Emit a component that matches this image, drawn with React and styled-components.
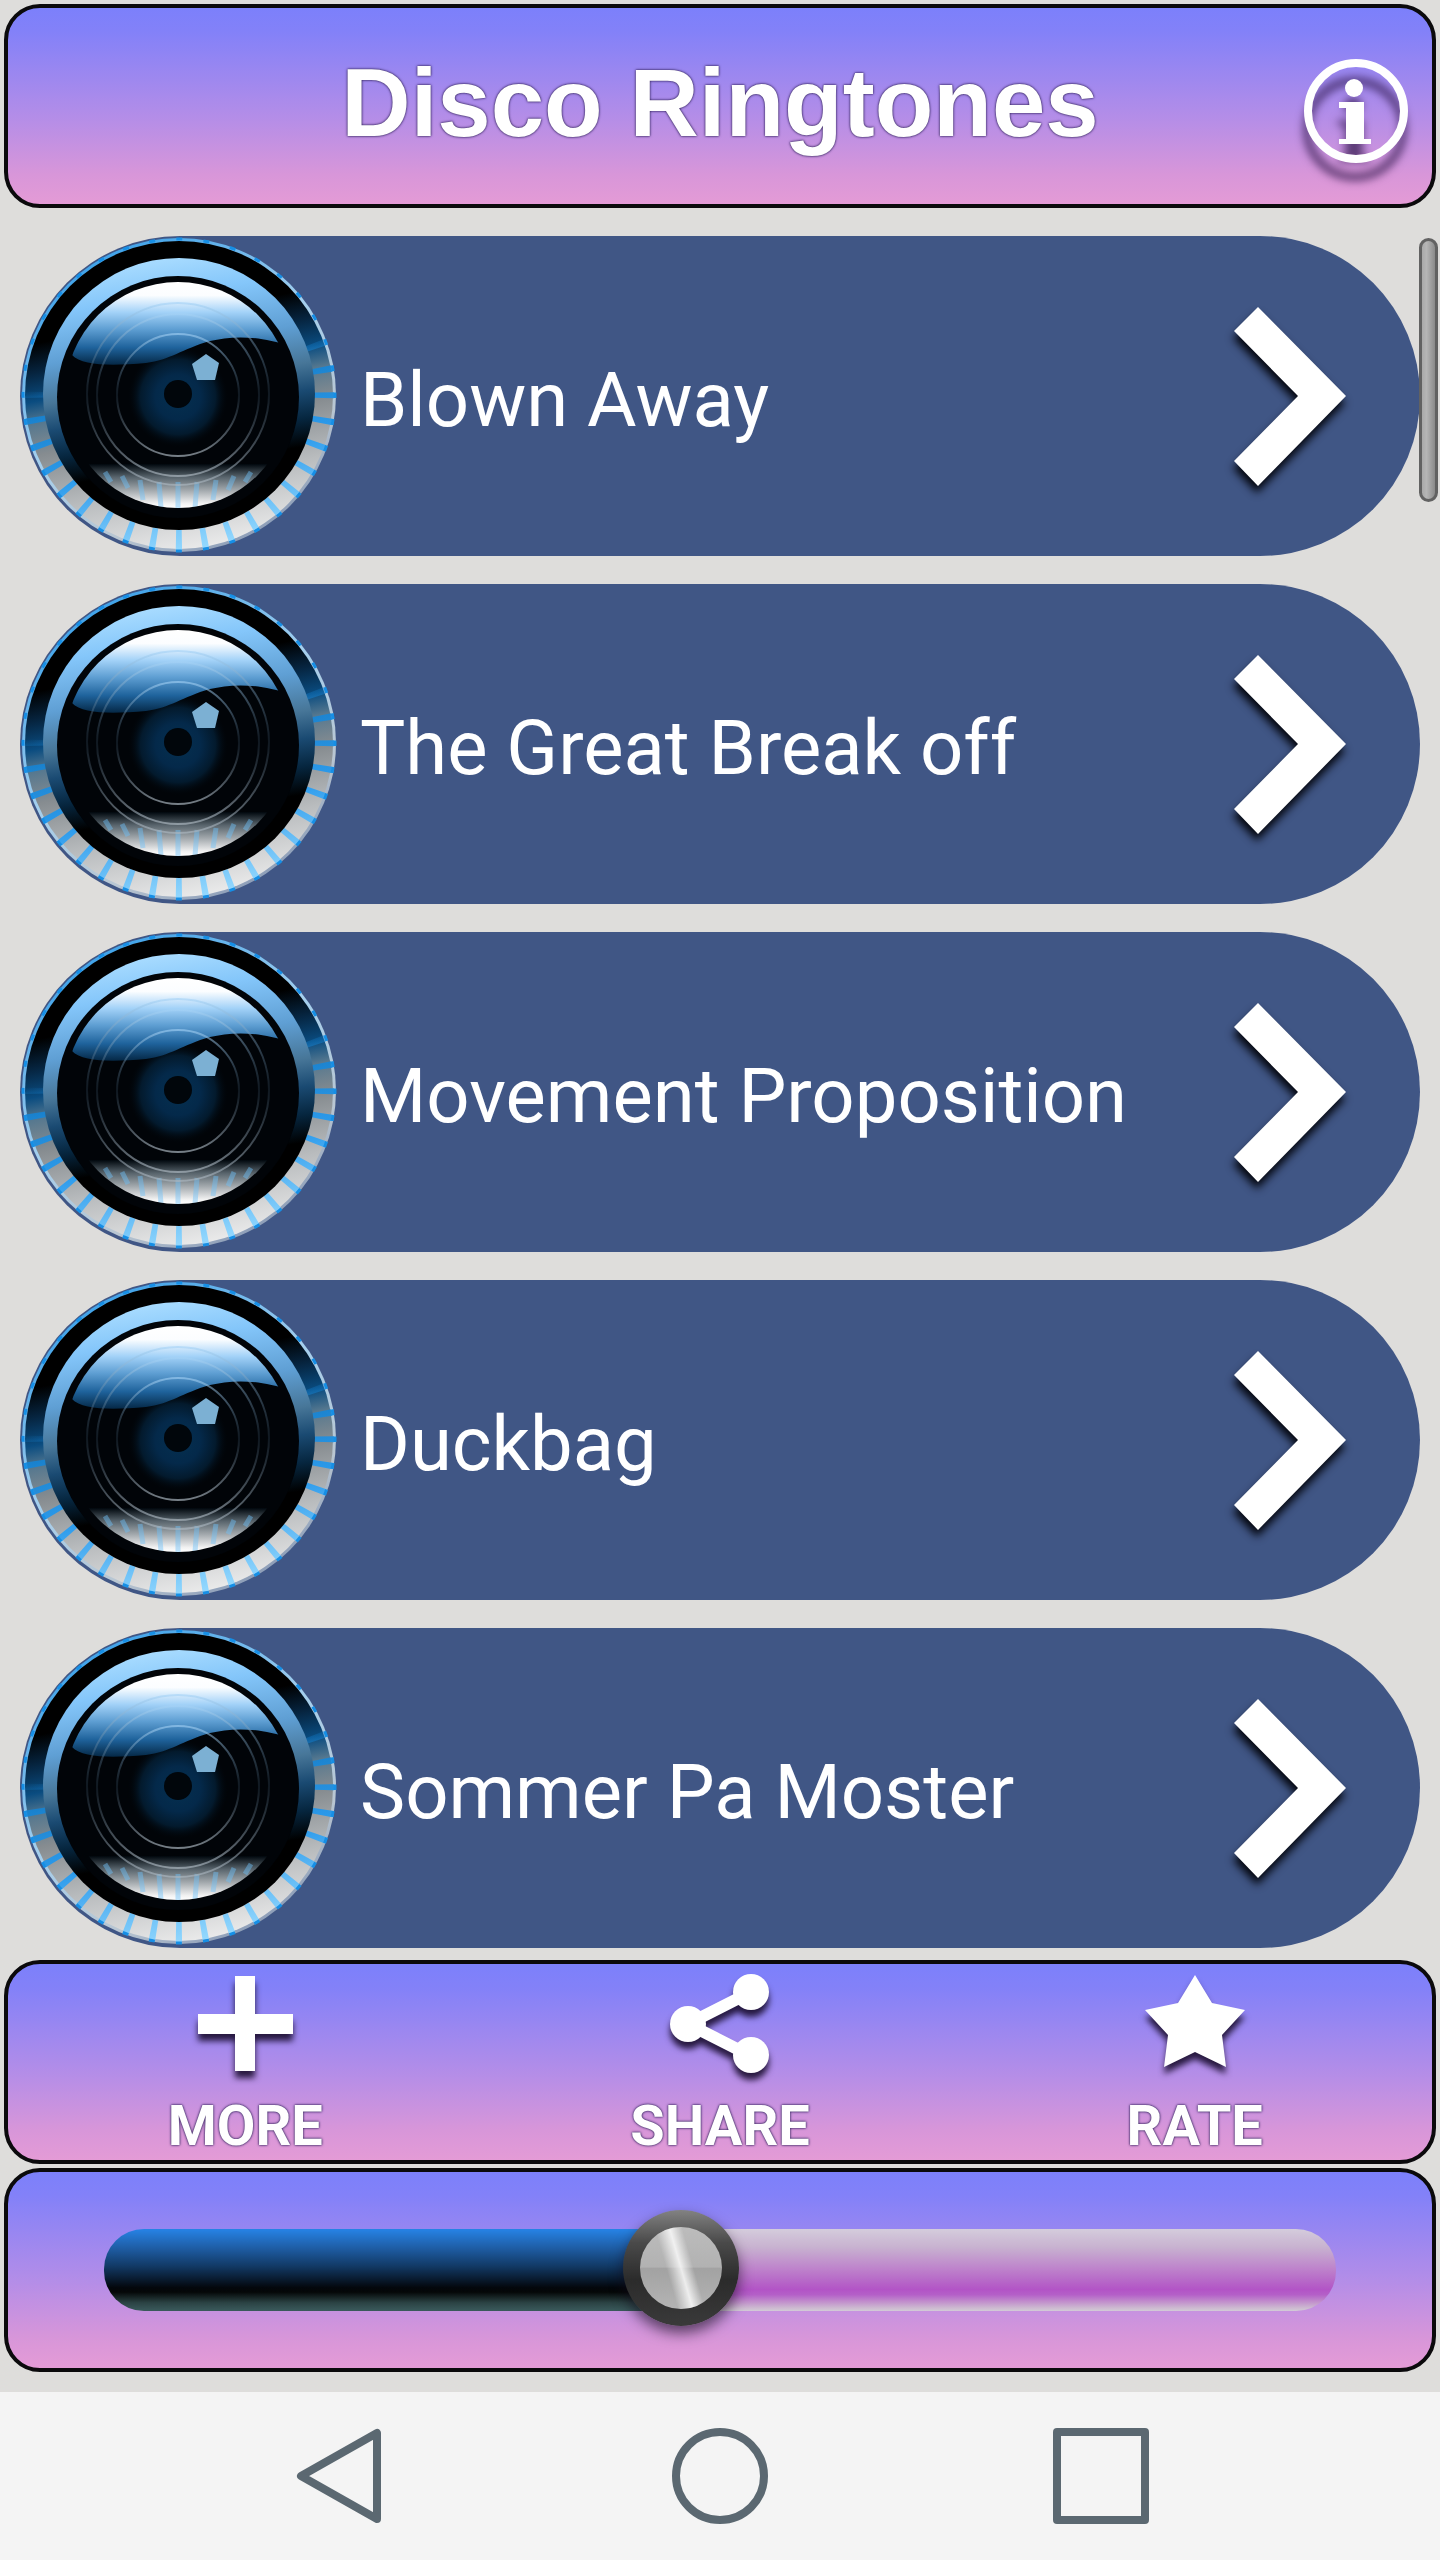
import React, { useState } from "react";
import styled, { createGlobalStyle, css } from "styled-components";

const GlobalStyle = createGlobalStyle`
  *, *::before, *::after { box-sizing: border-box; }
  body {
    margin: 0;
    background: #dedddb;
    font-family: Roboto, "Liberation Sans", sans-serif;
  }
`;

const plainButton = css`
  margin: 0;
  padding: 0;
  border: 0;
  background: none;
  color: inherit;
  font: inherit;
  cursor: pointer;
`;

const outlinedText = css`
  text-shadow: 0 0 2px #2c1c54, 0 0 3px #4a3a78;
`;

const Page = styled.div`
  display: flex;
  flex-direction: column;
  min-height: 100vh;
`;

const Panel = styled.div`
  min-height: 204px;
  margin: 0 4px;
  border: 4px solid #0b0a0c;
  border-radius: 36px;
  background: linear-gradient(#7c80fb 0%, #8381f8 12%, #b38de8 55%, #d896d9 85%, #e49bd6 100%);
  color: #fff;
`;

const Header = styled(Panel)`
  display: grid;
  grid-template-columns: 1fr auto 1fr;
  align-items: center;
  margin-top: 4px;
  padding: 0 24px;
`;

const Title = styled.h1`
  grid-column: 2;
  margin: 0 0 6px;
  font: bold 96px/112px "Liberation Sans", Arial, sans-serif;
  ${outlinedText}
`;

const InfoButton = styled.button`
  ${plainButton}
  justify-self: end;
  display: flex;
`;

const Shadowed = styled.svg`
  display: block;
  overflow: visible;
  filter: drop-shadow(${(p) => p.$shadow});
`;

const HiddenDefs = styled.svg`
  position: absolute;
`;

const ListArea = styled.main`
  position: relative;
  margin: 28px 20px 12px;
`;

const List = styled.ul`
  display: flex;
  flex-direction: column;
  gap: 28px;
  margin: 0;
  padding: 0;
  list-style: none;
`;

const Row = styled.button`
  ${plainButton}
  display: flex;
  align-items: center;
  gap: 20px;
  width: 100%;
  height: 320px;
  padding-right: 74px;
  border-radius: 160px;
  background: #405685;
  color: #fff;
  text-align: left;
`;

const RowLabel = styled.span`
  flex: 1;
  padding-top: 8px;
  font-size: 76px;
  line-height: 92px;
  white-space: nowrap;
`;

const ScrollThumb = styled.div`
  position: absolute;
  top: 2px;
  right: -18px;
  width: 19px;
  height: 264px;
  border: 3px solid #626262;
  border-radius: 10px;
  background: linear-gradient(90deg, #a9a9a9, #b6b6b6 35%, #8a8a8a);
`;

const Actions = styled(Panel)`
  display: flex;
  margin-bottom: 4px;
`;

const Action = styled.button`
  ${plainButton}
  flex: 1;
  display: flex;
  flex-direction: column;
  align-items: center;
  gap: 20px;
  padding-top: 10px;
  font-size: 56px;
  font-weight: 700;
  line-height: 64px;
  ${outlinedText}
`;

const VolumePanel = styled(Panel)`
  display: flex;
  align-items: center;
  margin-bottom: 20px;
  padding: 0 96px;
`;

const Volume = styled.input`
  appearance: none;
  width: 100%;
  height: 116px;
  margin: 0;
  background: none;

  &::-webkit-slider-runnable-track {
    height: 82px;
    border-radius: 40px;
    background:
      linear-gradient(#2683e6 0%, #1f5fa8 22%, #123a66 45%, #03060b 72%, #050808 77%, #2b4344 90%, #3a5a5c 100%)
        0 0 / var(--fill) 100% no-repeat,
      linear-gradient(#d4ccdc 0%, #c8b2d0 22%, #bd80cb 50%, #b254c6 74%, #b45fc8 80%, #ccb8d0 96%, #d2cad6 100%);
  }

  &::-webkit-slider-thumb {
    appearance: none;
    width: 116px;
    height: 116px;
    margin-top: -19px;
    border: 17px solid transparent;
    border-radius: 50%;
    background:
      linear-gradient(74deg, #fff0 36%, #fffa 48%, #fffc 50%, #fffa 52%, #fff0 62%) padding-box,
      linear-gradient(#bcbcbc, #b2b2b2 49%, #a2a2a2 50%, #b4b4b4) padding-box,
      linear-gradient(#828282, #4a4a4a 28%, #2b2b2b 60%, #3a3a3a) border-box;
    box-shadow: 0 7px 14px #1008189a;
  }
`;

const NavBar = styled.nav`
  display: flex;
  justify-content: center;
  align-items: center;
  gap: 285px;
  height: 168px;
  margin-top: auto;
  background: #f4f4f4;
`;

const NavButton = styled.button`
  ${plainButton}
  display: flex;
  color: #5b6871;
`;

function InfoIcon() {
  return (
    <Shadowed $shadow="-1px 18px 4px #2a1245aa" width="104" height="114" viewBox="0 -10 104 114" aria-hidden="true">
      <circle cx="52" cy="52" r="48" fill="none" stroke="#fff" strokeWidth="8" />
      <circle cx="50" cy="29" r="9" fill="#fff" />
      <path d="M35 43h25v37h7v5H35v-5h7V49h-7z" fill="#fff" />
    </Shadowed>
  );
}

function LensDefs() {
  return (
    <HiddenDefs width="0" height="0" aria-hidden="true">
      <defs>
        <linearGradient id="rim" x1=".4" y1="0" x2=".6" y2="1">
          <stop offset="0" stopColor="#000" />
          <stop offset=".25" stopColor="#000" />
          <stop offset=".34" stopColor="#06243f" />
          <stop offset=".43" stopColor="#0a4c80" />
          <stop offset=".5" stopColor="#56788f" />
          <stop offset=".6" stopColor="#868c90" />
          <stop offset=".78" stopColor="#b9bcbe" />
          <stop offset="1" stopColor="#ececec" />
        </linearGradient>
        <linearGradient id="rimEdge" x1=".2" y1="0" x2=".8" y2="1">
          <stop offset="0" stopColor="#2f9be8" />
          <stop offset=".45" stopColor="#a4cfee" />
          <stop offset=".75" stopColor="#b9c6d2" />
          <stop offset="1" stopColor="#7d8fae" />
        </linearGradient>
        <linearGradient id="bezel" x1=".42" y1="0" x2=".58" y2="1">
          <stop offset="0" stopColor="#a9dcff" />
          <stop offset=".14" stopColor="#84c6fa" />
          <stop offset=".32" stopColor="#5f9fd4" />
          <stop offset=".46" stopColor="#477698" />
          <stop offset=".56" stopColor="#1a4a72" />
          <stop offset=".66" stopColor="#06263f" />
          <stop offset=".76" stopColor="#000" />
          <stop offset="1" stopColor="#000" />
        </linearGradient>
        <linearGradient id="gloss" gradientUnits="userSpaceOnUse" x1="0" y1="46" x2="0" y2="130">
          <stop offset="0" stopColor="#fff" />
          <stop offset=".16" stopColor="#fbfdff" />
          <stop offset=".36" stopColor="#a3d2f8" />
          <stop offset=".56" stopColor="#5f9fd3" />
          <stop offset=".78" stopColor="#1f639c" />
          <stop offset="1" stopColor="#032440" />
        </linearGradient>
        <linearGradient id="floor" gradientUnits="userSpaceOnUse" x1="0" y1="228" x2="0" y2="272">
          <stop offset="0" stopColor="#00070d" />
          <stop offset=".3" stopColor="#58646c" />
          <stop offset=".6" stopColor="#a3a9ad" />
          <stop offset=".9" stopColor="#f2f2f2" />
          <stop offset="1" stopColor="#fff" />
        </linearGradient>
        <radialGradient id="iris">
          <stop offset="0" stopColor="#053050" />
          <stop offset=".45" stopColor="#04294a" />
          <stop offset=".75" stopColor="#031a2d" />
          <stop offset="1" stopColor="#01060b" stopOpacity="0" />
        </radialGradient>
        <linearGradient id="tick" gradientUnits="userSpaceOnUse" x1="128" y1="0" x2="190" y2="316">
          <stop offset=".4" stopColor="#1483d4" stopOpacity="0" />
          <stop offset=".48" stopColor="#1483d4" stopOpacity=".9" />
          <stop offset=".7" stopColor="#2c9bec" />
          <stop offset="1" stopColor="#9bdcff" />
        </linearGradient>
        <linearGradient id="ringLine" x1="0" y1="0" x2="0" y2="1">
          <stop offset="0" stopColor="#a4d2f6" stopOpacity=".6" />
          <stop offset=".5" stopColor="#33495c" stopOpacity=".3" />
          <stop offset="1" stopColor="#a9b4bd" stopOpacity=".7" />
        </linearGradient>
        <clipPath id="glass">
          <circle cx="158" cy="159" r="113" />
        </clipPath>
      </defs>
    </HiddenDefs>
  );
}

function Lens() {
  return (
    <svg width="320" height="320" viewBox="0 0 320 320" aria-hidden="true">
      <circle cx="159" cy="159" r="157" fill="url(#rimEdge)" />
      <circle cx="159" cy="159" r="154" fill="url(#rim)" />
      <circle cx="159" cy="159" r="145" fill="none" stroke="url(#tick)" strokeWidth="20" strokeDasharray="6 19.307" strokeDashoffset="3" />
      <circle cx="159" cy="159" r="156" fill="none" stroke="#168fe6" strokeWidth="3" strokeDasharray="6 21.227" strokeDashoffset="3" />
      <circle cx="159" cy="158" r="136" fill="url(#bezel)" />
      <circle cx="158" cy="161" r="121" fill="#010408" />
      <g clipPath="url(#glass)">
        <rect x="40" y="228" width="240" height="46" fill="url(#floor)" />
        <path
          d="M85 236l6 10M102 240l6 12M120 244l3 20M139 246l2 26M158 246v28M177 246l-2 26M196 244l-3 20M214 240l-6 14M231 236l-6 10"
          stroke="#6fc0f8"
          strokeWidth="5"
          opacity=".45"
        />
        <circle cx="158" cy="161" r="50" fill="url(#iris)" />
        <path d="M30 30h250v84C240 98 212 100 190 105 162 113 150 124 126 127 92 130 62 130 52 119H30z" fill="url(#gloss)" />
      </g>
      <g fill="none" stroke="url(#ringLine)" strokeWidth="2">
        <circle cx="158" cy="158" r="91" />
        <circle cx="158" cy="159" r="81" />
        <circle cx="158" cy="159" r="61" />
      </g>
      <circle cx="158" cy="158" r="14" fill="#01060b" />
      <path d="M186 118l13 9-4 17h-18l-5-16z" fill="#7cb0d3" />
    </svg>
  );
}

function Chevron() {
  return (
    <Shadowed $shadow="-1px 7px 4px #04060e" width="112" height="180" viewBox="0 0 112 180" aria-hidden="true">
      <path d="M24 1 112 90 24 180 0 155 64 90 0 25z" fill="#fff" />
    </Shadowed>
  );
}

const actionShadow = "0 7px 3px #1a0c2ce6";

function PlusIcon() {
  return (
    <Shadowed $shadow={actionShadow} width="100" height="100" viewBox="0 0 100 100" aria-hidden="true">
      <path d="M40 2h20v38h38v20H60v37H40V60H3V40h37z" fill="#fff" />
    </Shadowed>
  );
}

function ShareIcon() {
  return (
    <Shadowed $shadow={actionShadow} width="100" height="100" viewBox="0 0 100 100" aria-hidden="true">
      <path d="M81 18 18 50l63 32" fill="none" stroke="#fff" strokeWidth="12" />
      <g fill="#fff">
        <circle cx="81" cy="18" r="18" />
        <circle cx="18" cy="50" r="18" />
        <circle cx="81" cy="81" r="18" />
      </g>
    </Shadowed>
  );
}

function StarIcon() {
  return (
    <Shadowed $shadow={actionShadow} width="100" height="100" viewBox="0 0 100 100" aria-hidden="true">
      <path d="M50 1 67 29 100 36 77 61 81 93 50 78 19 93 23 61 0 36 33 29z" fill="#fff" />
    </Shadowed>
  );
}

const navShapes = {
  Back: <path d="M86 5v86L10 48z" />,
  Home: <circle cx="48" cy="48" r="44" />,
  Recents: <rect x="4" y="4" width="88" height="88" />,
};

const songs = ["Blown Away", "The Great Break off", "Movement Proposition", "Duckbag", "Sommer Pa Moster"];

const actions = [
  { label: "MORE", Icon: PlusIcon },
  { label: "SHARE", Icon: ShareIcon },
  { label: "RATE", Icon: StarIcon },
];

export default function App() {
  const [volume, setVolume] = useState(465);
  const ratio = volume / 1000;

  return (
    <Page>
      <GlobalStyle />
      <LensDefs />
      <Header as="header">
        <Title>Disco Ringtones</Title>
        <InfoButton aria-label="Info">
          <InfoIcon />
        </InfoButton>
      </Header>
      <ListArea>
        <List>
          {songs.map((song) => (
            <li key={song}>
              <Row>
                <Lens />
                <RowLabel>{song}</RowLabel>
                <Chevron />
              </Row>
            </li>
          ))}
        </List>
        <ScrollThumb />
      </ListArea>
      <Actions>
        {actions.map(({ label, Icon }) => (
          <Action key={label}>
            <Icon />
            {label}
          </Action>
        ))}
      </Actions>
      <VolumePanel>
        <Volume
          type="range"
          aria-label="Volume"
          min="0"
          max="1000"
          value={volume}
          onChange={(e) => setVolume(Number(e.target.value))}
          style={{ "--fill": `calc(58px + (100% - 116px) * ${ratio})` }}
        />
      </VolumePanel>
      <NavBar>
        {Object.entries(navShapes).map(([name, shape]) => (
          <NavButton key={name} aria-label={name}>
            <svg width="96" height="96" viewBox="0 0 96 96" fill="none" stroke="currentColor" strokeWidth="8" strokeLinejoin="round" aria-hidden="true">
              {shape}
            </svg>
          </NavButton>
        ))}
      </NavBar>
    </Page>
  );
}
